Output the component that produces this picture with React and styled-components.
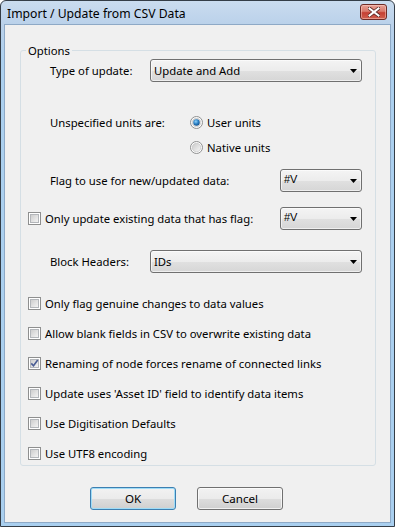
import React from 'react';
import styled, { createGlobalStyle } from 'styled-components';

const FONT = `"Noto Sans", "Open Sans", sans-serif`;

const Global = createGlobalStyle`
  html, body { margin: 0; padding: 0; background: #ffffff; }
  body { font-family: ${FONT}; }
`;

const Window = styled.div`
  width: 395px;
  height: 527px;
  box-sizing: border-box;
  border: 1px solid #343d47;
  border-radius: 6px 6px 0 0;
  background: linear-gradient(#cadcef 0px, #bad1ea 24px, #acd0ef 60px, #a9cfef 100%);
  display: flex;
  flex-direction: column;
  font-family: ${FONT};
  font-size: 11.3px;
  color: #000;
  overflow: hidden;
`;

const TitleBar = styled.div`
  height: 23px;
  flex: none;
  display: flex;
  align-items: flex-start;
  justify-content: space-between;
  padding: 0 7px 0 6px;
`;

const Title = styled.span`
  font-size: 12.2px;
  line-height: 23px;
  padding-top: 1px;
  color: #000;
  white-space: nowrap;
`;

const CloseButton = styled.div`
  margin-top: 3px;
  width: 27px;
  height: 16px;
  box-sizing: border-box;
  border: 1px solid #6e2b26;
  border-radius: 3px;
  background: linear-gradient(#e8a096 0%, #d97a6c 45%, #c53f33 55%, #d0604f 100%);
  box-shadow: inset 0 0 0 1px rgba(255, 220, 210, 0.45);
  display: flex;
  align-items: center;
  justify-content: center;
`;

const Client = styled.div`
  flex: 1;
  margin: 0 3px 3px;
  border: 1px solid #8ea9c6;
  background: #f0f0f0;
  display: flex;
  flex-direction: column;
  padding: 18px 14px 0 15px;
`;

const Group = styled.fieldset`
  margin: 0;
  padding: 0 13px 2px 7px;
  border: 1px solid #d5dfe5;
  border-radius: 3px;
  display: flex;
  flex-direction: column;
  min-width: 0;
`;

const Legend = styled.legend`
  padding: 0 2px;
  margin-left: -2px;
  line-height: 15px;
  font-size: 11.3px;
`;

const Row = styled.div`
  display: flex;
  align-items: center;
  height: ${(p) => p.$h || 23}px;
  margin-top: ${(p) => p.$mt || 0}px;
  padding-left: ${(p) => (p.$indent ? 22 : 0)}px;
`;

const Label = styled.span`
  width: ${(p) => p.$w}px;
  flex: none;
  white-space: nowrap;
`;

const ComboBox = styled.div`
  box-sizing: border-box;
  width: ${(p) => p.$w}px;
  height: 23px;
  flex: none;
  border: 1px solid #707070;
  border-radius: 3px;
  background: linear-gradient(#f4f4f4 0%, #ececec 50%, #e0e0e0 52%, #d6d6d6 100%);
  box-shadow: inset 0 0 0 1px rgba(255, 255, 255, 0.6);
  display: flex;
  align-items: center;
  justify-content: space-between;
  padding: 0 4px 0 3px;
`;

const ComboText = styled.span`
  font-family: ${(p) => (p.$mono ? `"Liberation Sans", Arial, sans-serif` : FONT)};
  font-size: ${(p) => (p.$mono ? '11px' : '11.3px')};
  margin-top: ${(p) => (p.$mono ? '-4px' : '0')};
  white-space: nowrap;
`;

const Choice = styled.label`
  display: flex;
  align-items: center;
  gap: 4px;
  white-space: nowrap;
  width: ${(p) => (p.$w ? `${p.$w}px` : 'auto')};
  flex: none;
`;

const ButtonRow = styled.div`
  display: flex;
  gap: 21px;
  margin-top: 21px;
  padding-left: 70px;
`;

const Button = styled.div`
  box-sizing: border-box;
  width: 86px;
  height: 23px;
  border: 1px solid ${(p) => (p.$default ? '#3c7fb1' : '#707070')};
  border-radius: 3px;
  background: linear-gradient(#f2f2f2 0%, #ebebeb 50%, #dddddd 52%, #cfcfcf 100%);
  box-shadow: ${(p) =>
    p.$default ? 'inset 0 0 0 1px #9fdcf7' : 'inset 0 0 0 1px rgba(255,255,255,0.7)'};
  display: flex;
  align-items: center;
  justify-content: center;
  font-size: 11.6px;
`;

const Arrow = () => (
  <svg width="7" height="4" viewBox="0 0 7 4">
    <path d="M0 0H7L3.5 4Z" fill="#000" />
  </svg>
);

const Combo = ({ w, text, mono }) => (
  <ComboBox $w={w}>
    <ComboText $mono={mono}>{text}</ComboText>
    <Arrow />
  </ComboBox>
);

const CheckIcon = ({ checked }) => (
  <svg width="13" height="13" viewBox="0 0 13 13" style={{ flex: 'none' }}>
    <defs>
      <linearGradient id="cbg" x1="0" y1="0" x2="1" y2="1">
        <stop offset="0" stopColor="#cbcbcb" />
        <stop offset="1" stopColor="#f6f6f6" />
      </linearGradient>
    </defs>
    <rect x="0.5" y="0.5" width="12" height="12" fill="#fff" stroke="#8e8f8f" />
    <rect x="2.5" y="2.5" width="8" height="8" fill="url(#cbg)" stroke="#b3b6ba" />
    {checked && (
      <path d="M3.3 6.4L5.5 8.8L9.7 3" fill="none" stroke="#4a5d94" strokeWidth="1.6" />
    )}
  </svg>
);

const RadioIcon = ({ checked }) => (
  <svg width="13" height="13" viewBox="0 0 13 13" style={{ flex: 'none' }}>
    <defs>
      <linearGradient id="rbg" x1="0" y1="0" x2="1" y2="1">
        <stop offset="0" stopColor="#c9c9c9" />
        <stop offset="1" stopColor="#f7f7f7" />
      </linearGradient>
      <radialGradient id="rdot" cx="0.4" cy="0.35" r="0.7">
        <stop offset="0" stopColor="#8fd3fb" />
        <stop offset="0.55" stopColor="#2a7fc4" />
        <stop offset="1" stopColor="#154e85" />
      </radialGradient>
    </defs>
    <circle cx="6.5" cy="6.5" r="6" fill="#fff" stroke="#8e8f8f" />
    <circle cx="6.5" cy="6.5" r="4.3" fill="url(#rbg)" stroke="#bcbcbc" strokeWidth="0.6" />
    {checked && <circle cx="6.5" cy="6.5" r="3.2" fill="url(#rdot)" />}
  </svg>
);

const CloseGlyph = () => (
  <svg width="12" height="10" viewBox="0 0 12 10">
    <path
      d="M1.5 1.5L10.5 8.5M10.5 1.5L1.5 8.5"
      stroke="#5a2a26"
      strokeWidth="3.6"
      strokeLinecap="square"
    />
    <path
      d="M1.5 1.5L10.5 8.5M10.5 1.5L1.5 8.5"
      stroke="#ffffff"
      strokeWidth="2"
      strokeLinecap="square"
    />
  </svg>
);

const checks = [
  { text: 'Only flag genuine changes to data values', checked: false },
  { text: 'Allow blank fields in CSV to overwrite existing data', checked: false },
  { text: 'Renaming of node forces rename of connected links', checked: true },
  { text: "Update uses 'Asset ID' field to identify data items", checked: false },
  { text: 'Use Digitisation Defaults', checked: false },
  { text: 'Use UTF8 encoding', checked: false },
];

export default function App() {
  return (
    <>
      <Global />
      <Window>
        <TitleBar>
          <Title>Import / Update from CSV Data</Title>
          <CloseButton>
            <CloseGlyph />
          </CloseButton>
        </TitleBar>
        <Client>
          <Group>
            <Legend>Options</Legend>
            <Row $mt={1} $indent>
              <Label $w={100}>Type of update:</Label>
              <Combo w={212} text="Update and Add" />
            </Row>
            <Row $mt={30} $h={20} $indent>
              <Label $w={140}>Unspecified units are:</Label>
              <Choice>
                <RadioIcon checked />
                User units
              </Choice>
            </Row>
            <Row $mt={5} $h={20} $indent>
              <Label $w={140} />
              <Choice>
                <RadioIcon />
                Native units
              </Choice>
            </Row>
            <Row $mt={12} $indent>
              <Label $w={230}>Flag to use for new/updated data:</Label>
              <Combo w={82} text="#V" mono />
            </Row>
            <Row $mt={15}>
              <Choice $w={252}>
                <CheckIcon />
                Only update existing data that has flag:
              </Choice>
              <Combo w={82} text="#V" mono />
            </Row>
            <Row $mt={20} $indent>
              <Label $w={100}>Block Headers:</Label>
              <Combo w={212} text="IDs" />
            </Row>
            {checks.map((c, i) => (
              <Row key={c.text} $mt={i === 0 ? 20 : 10} $h={20}>
                <Choice>
                  <CheckIcon checked={c.checked} />
                  {c.text}
                </Choice>
              </Row>
            ))}
          </Group>
          <ButtonRow>
            <Button $default>OK</Button>
            <Button>Cancel</Button>
          </ButtonRow>
        </Client>
      </Window>
    </>
  );
}
